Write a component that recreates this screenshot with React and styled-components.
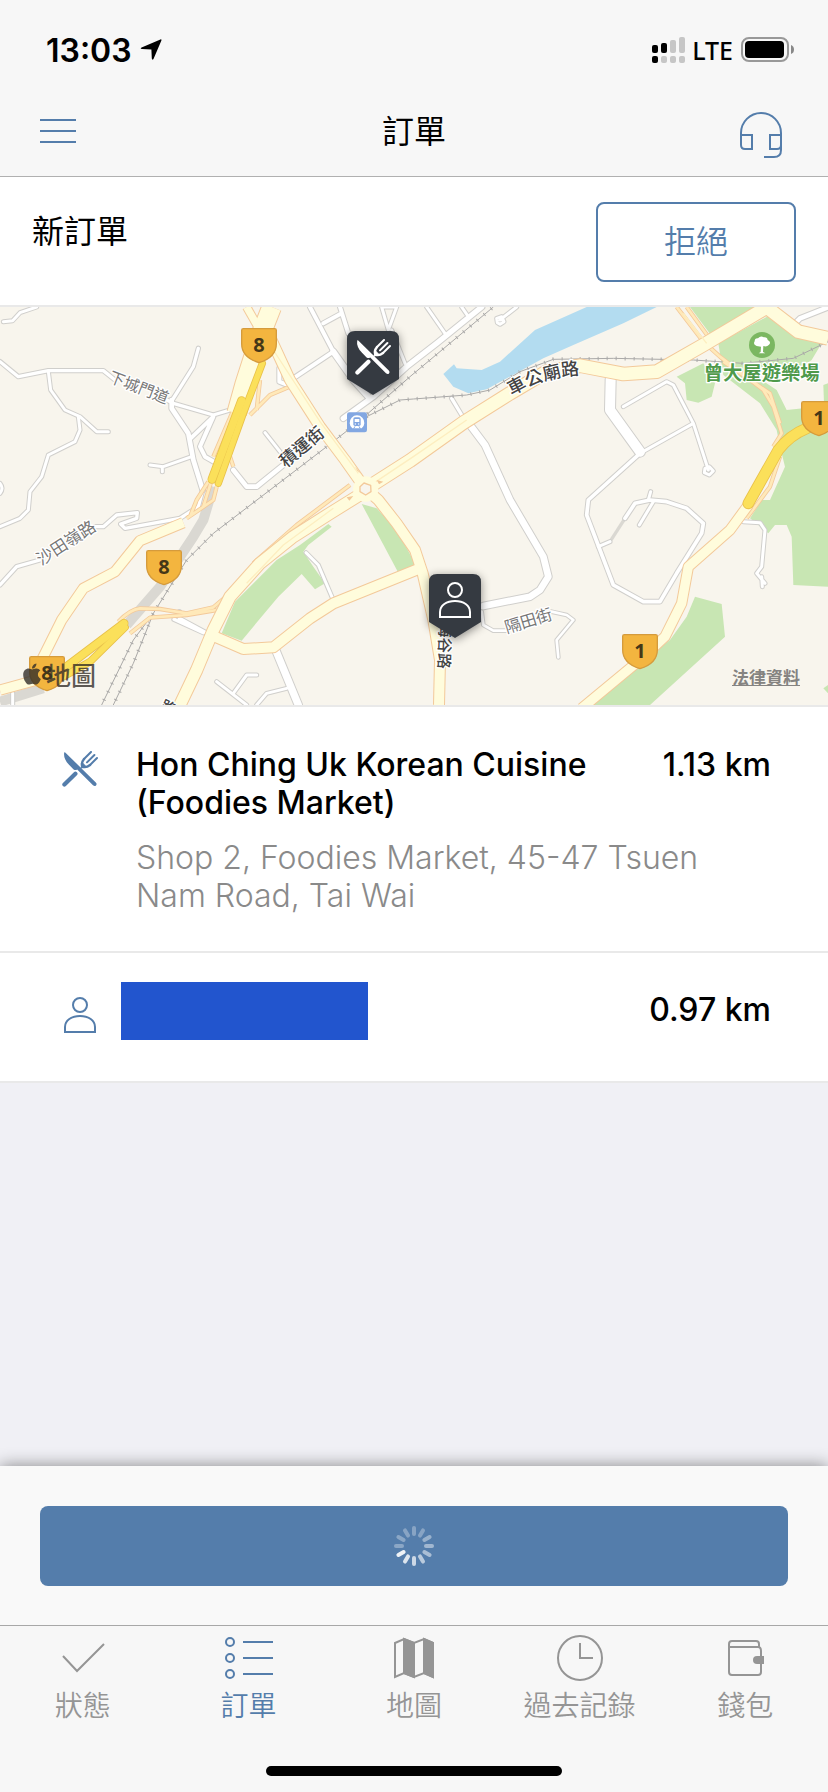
import React from 'react';
import styled, { createGlobalStyle } from 'styled-components';
import { FaApple } from 'react-icons/fa';

const blue = '#547dab';
const grey = '#959595';

// MAP DATA ------------------------

const greens = [
    '665,1000 705,905 830,780 900,735 985,672 995,680 925,735 910,755 940,800 975,850 945,868 905,822 835,890 725,1022',
    '1085,612 1130,625 1190,690 1248,795 1195,818',
    '2070,21 2262,21 2135,108',
    '2155,130 2310,45 2395,105 2465,130 2435,180 2405,200 2280,215 2270,230 2330,270 2360,330 2410,325 2484,400 2484,860 2380,855 2375,710 2360,675 2325,675 2305,700 2250,655 2285,600 2310,600 2355,500 2340,440 2330,390 2280,310 2170,225',
    '2030,230 2110,190 2145,250 2135,290 2095,308 2060,300 2055,250',
    '1770,1215 1960,1060 2010,1020 2060,950 2085,890 2165,912 2175,1010 1950,1215',
    '2470,255 2484,250 2484,310 2472,310',
    '2470,1165 2484,1155 2484,1180',
];

const streets = [
    { w: 10, d: 'M0 185L55 230L145 212H310L345 240M500 300L520 310L640 345L690 330L710 310' },
    { w: 9, d: 'M145 215L152 270L195 330L240 350L290 395H325' },
    { w: 9, d: 'M235 350L240 390L225 425L145 465L125 530L90 575L85 630L60 655L0 680' },
    { w: 10, d: 'M0 855L50 800L120 780M285 680H310L350 645L412 638L410 655L362 672L375 685L540 655L595 620L608 570' },
    { w: 14, d: 'M608 570L580 480L565 400L515 325V300' },
    { w: 10, d: 'M517 300L580 200L595 145' },
    { w: 12, d: 'M640 350L572 415M640 350L600 440L615 470L650 490' },
    { w: 14, d: 'M700 510L740 560H770L850 495L880 470' },
    { w: 9, d: 'M840 455L795 398M450 495L490 500L575 470M487 500V515' },
    { w: 12, d: 'M838 205V245L862 255M880 235L1000 155L930 21M970 70L1025 40M1020 21L1045 100' },
    { w: 18, d: 'M1000 155L1060 240L1105 290' },
    { w: 9, d: 'M1145 21L1165 90L1190 21H1150M1175 90L1215 190' },
    { w: 16, d: 'M1030 355L1120 290L1220 200L1310 130L1445 21' },
    { w: 9, d: 'M1280 21L1335 100M1385 21L1405 50M1500 60L1550 21M1490 55L1505 50L1512 65L1500 73L1492 68Z' },
    { w: 10, d: 'M1355 295L1385 345' },
    { w: 20, d: 'M1410 375L1455 435L1530 600L1630 770L1645 830L1620 870L1590 890L1450 918' },
    { w: 8, d: 'M1445 935L1450 975L1480 992H1520M1655 935L1700 945L1720 960L1670 1020L1675 1072' },
    { w: 30, d: 'M1832 238L1830 330L1920 455' },
    { w: 11, d: 'M1920 460L1765 600L1760 645L1840 855L1930 905H1980L2030 820L2105 700L2110 670L2060 625L2000 605L1950 600L1905 610L1875 655' },
    { w: 9, d: 'M1960 605L1918 675M1952 575L1945 600M1795 740L1830 725' },
    { w: 9, d: 'M1870 320L2000 245L2020 255L2080 370L2125 510M2080 370L1920 460M2115 505L2128 500L2140 513L2128 525L2113 518Z' },
    { w: 9, d: 'M2230 665L2280 668L2295 690L2285 800L2270 820L2295 850M2285 830L2287 860' },
    { w: 14, d: 'M2385 70L2400 55L2484 22' },
    { w: 22, d: 'M825 1045L895 1215' },
    { w: 9, d: 'M650 1145L740 1215M700 1180L740 1125H770M770 1215L800 1180L860 1165' },
    { w: 9, d: 'M918 758L955 795L1002 905' },
    { w: 10, d: 'M538 935V955L640 1010M522 958L610 998' },
    { w: 9, d: 'M0 550Q12 565 0 580M38 1180V1215M10 65L38 62L60 38L110 21' },
];

const avenues = [
    { w: 56, d: 'M815 21L780 110L735 250L710 340' },
    { w: 22, d: 'M740 21L785 100' },
    { w: 30, d: 'M810 110L870 240L960 380L1035 480L1095 565L1135 600L1190 670L1245 750L1268 820L1300 960L1320 1080L1317 1215' },
    { w: 38, d: 'M1095 568L1230 482L1390 368L1530 280L1640 215L1740 197L1870 222L1970 215L2110 135L2300 22L2395 95L2484 115' },
    { w: 34, d: 'M1095 575L990 640L880 710L780 790L690 890L640 990L590 1110L535 1225' },
    { w: 30, d: 'M1260 805L1000 910L930 955L820 1042L730 1047L640 1008' },
    { w: 28, d: 'M550 668L420 722L345 815L250 865L185 960L110 1110M0 1170L110 1140' },
    { w: 28, d: 'M2245 615L2190 690L2065 800L2045 910L1995 1010L1920 1080L1745 1225' },
];

const ramps = [
    'M2030 21L2110 125L2160 170L2290 270L2320 320L2345 400L2320 440M2060 21L2125 110',
    'M2170 185L2310 280L2340 370M2340 470L2310 560L2240 655',
    'M865 262L810 285L750 345M640 470L700 330M700 500L690 470M770 330L780 240',
    'M355 965Q390 928 420 925L480 927L560 940L640 922L690 880M390 1000L450 953L560 945L650 930',
    'M625 545L590 600L570 650M650 560L640 600L560 655M632 550L610 620',
    'M1050 555L890 675L760 790',
];

const highways = [
    { w: 17, d: 'M787 190L730 340L655 550' },
    { w: 22, d: 'M725 302L636 538' },
    { w: 22, d: 'M372 970L200 1100' },
    { w: 18, d: 'M375 982L270 1085L190 1130' },
    { w: 30, d: 'M2420 385Q2370 405 2335 450L2290 530L2245 610' },
];

const rails = [
    'M300 1225L400 1020L460 940L560 780L640 700L980 440L1070 370L1230 230L1480 21',
    'M335 1225L400 1090L460 940M1100 350L1200 300L1240 297L1400 285L1470 270L1560 215L1660 178L1840 175L2080 180L2230 190L2380 175L2484 125',
];

const shields = [
    { x: 777, y: 86, n: 8 },
    { x: 492, y: 752, n: 8 },
    { x: 141, y: 1070, n: 8 },
    { x: 2457, y: 305, n: 1 },
    { x: 1920, y: 1004, n: 1 },
];

const labels = [
    { x: 417, y: 262, size: 47, turn: 21, text: '下城門道' },
    { x: 905, y: 440, size: 52, turn: -40, text: '積運街', strong: true },
    { x: 198, y: 728, size: 50, turn: -33, text: '沙田嶺路' },
    { x: 1585, y: 962, size: 49, turn: -17, text: '隔田街' },
    { x: 1334, y: 1036, size: 47, turn: 92, text: '梅谷路', strong: true },
    { x: 505, y: 1222, size: 44, turn: 25, text: '路', strong: true },
];

// ICONS ------------------------

const UtensilsIcon = () => (
    <svg width="36" height="36" viewBox="0 0 36 36" fill="none" stroke="currentColor" strokeLinecap="round" aria-hidden="true">
        <path d="M2.2 1.4Q1.2 7.5 6.8 13.6L11.6 18.6Q13.5 19.6 15.2 18.6L31 34.2Q32.6 35.6 34 34.4Q35.3 33 33.8 31.4L4 2.2Q2.8 .8 2.2 1.4Z" fill="currentColor" stroke="none" />
        <path d="M2.4 33.6L13.4 22.8" strokeWidth="4.2" />
        <path d="M29 1L22 8M32.4 4L25 11.4M35 7L28 14" strokeWidth="2" />
        <path d="M22 8Q18.8 12 20.4 15.6Q24 17.2 28 14" strokeWidth="2.4" />
        <path d="M20.6 12L24 15.6L19.4 17Z" fill="currentColor" strokeWidth="1" />
    </svg>
);

const PersonIcon = () => (
    <svg width="36" height="36" viewBox="0 0 36 36" fill="none" stroke="currentColor" strokeWidth="2" aria-hidden="true">
        <circle cx="18" cy="8" r="7" />
        <path d="M3 35V30C3 23.500 9.500 19 18 19S33 23.500 33 30V35Z" />
    </svg>
);

const HeadsetIcon = () => (
    <svg width="42" height="46" viewBox="0 0 42 46" fill="none" stroke="currentColor" strokeWidth="2" aria-hidden="true">
        <path d="M1 23V21A20 20 0 0 1 41 21V38Q41 45 34 45H24" />
        <path d="M1 23H12V37H5Q1 37 1 33ZM41 23H30V37H37Q41 37 41 33Z" />
    </svg>
);

const tabIcons = {
    check: <path d="M4 22L18 37L45 10" />,
    list: (
        <>
            <circle cx="6" cy="8" r="4" /><circle cx="6" cy="24" r="4" /><circle cx="6" cy="40" r="4" />
            <path d="M19 8H49M19 24H49M19 40H49" />
        </>
    ),
    map: (
        <>
            <path d="M5 9L14 5L24 9L34 5L43 9V43L34 39L24 43L14 39L5 43Z" />
            <path d="M14 5L24 9V43L14 39ZM34 5L43 9V43L34 39Z" fill="currentColor" />
        </>
    ),
    clock: (
        <>
            <circle cx="24" cy="24" r="22" />
            <path d="M24 9V24H37" />
        </>
    ),
    wallet: (
        <>
            <path d="M8 14V10Q8 7 11 7H35Q38 7 38 10V14" />
            <path d="M8 13H37Q40 13 40 17V38Q40 41 37 41H11Q8 41 8 38Z" />
            <path d="M43 22V30H36Q32 30 32 26Q32 22 36 22Z" fill="currentColor" stroke="none" />
        </>
    ),
};

const spokes = [30, 30, 40, 45, 50, 60, 70, 80, 90, 32, 32, 30];

const Spinner = () => (
    <svg width="40" height="40" viewBox="-20 -20 40 40" stroke="#fff" strokeWidth="4" strokeLinecap="round" aria-hidden="true">
        {spokes.map((o, i) => (
            <line key={i} y1="-12" y2="-18" opacity={o / 100} transform={`rotate(${i * 30})`} />
        ))}
    </svg>
);

const StatusIcons = () => (
    <svg width="34" height="28" viewBox="0 0 34 28" aria-hidden="true">
        <g fill="#000">
            <rect y="9" width="6" height="8" rx="2" /><rect x="9" y="7" width="6" height="10" rx="2" />
            <rect y="20" width="6" height="7" rx="2" />
        </g>
        <g fill="#c6c6c6">
            <rect x="18" y="4" width="6" height="13" rx="2" /><rect x="27" y="1" width="6" height="16" rx="2" />
            <rect x="9" y="20" width="6" height="7" rx="2" /><rect x="18" y="20" width="6" height="7" rx="2" />
            <rect x="27" y="20" width="6" height="7" rx="2" />
        </g>
    </svg>
);

const Battery = () => (
    <svg width="54" height="26" viewBox="0 0 54 26" aria-hidden="true">
        <rect x="1" y="1" width="46" height="23" rx="7" fill="none" stroke="#999" strokeWidth="2" />
        <rect x="4" y="4" width="39" height="17" rx="4" />
        <path d="M50 8Q53 9 53 12.500T50 17Z" fill="#888" />
    </svg>
);

// MAP ------------------------

const MapDrawing = () => (
    <MapSvg viewBox="0 21 2484 1194" role="img" aria-label="地圖">
        <rect y="21" width="2484" height="1194" fill="#f8f5ed" />
        {greens.map(p => <polygon key={p} points={p} fill="#c8e6b3" />)}
        <path fill="#b3dcf0" d="M1760 21L1605 90L1500 185L1445 210L1370 205L1362 193L1330 222L1360 260L1405 280L1460 268L1630 175L1720 135L1870 70L1970 21Z" />

        <g fill="none" strokeLinejoin="round">
            <path d="M640 560L610 660L580 710L480 860L380 975M0 1205L130 1165" stroke="#dad8d2" strokeWidth="30" />
            <path d="M1830 725L1875 655" stroke="#dad8d2" strokeWidth="10" />
            <g strokeLinecap="round">
                {streets.map(r => <path key={r.d} d={r.d} stroke="#d0cfcc" strokeWidth={r.w + 6} />)}
                {streets.map(r => <path key={r.d} d={r.d} stroke="#fff" strokeWidth={r.w} />)}
            </g>
            {rails.map(d => (
                <g key={d} stroke="#aaa9a8">
                    <path d={d} strokeWidth="3" />
                    <path d={d} strokeWidth="11" strokeDasharray="3 24" />
                </g>
            ))}
            {ramps.map(d => <path key={d} d={d} stroke="#f3c99a" strokeWidth="13" />)}
            {ramps.map(d => <path key={d} d={d} stroke="#ffe9b9" strokeWidth="8" />)}
            {avenues.map(r => <path key={r.d} d={r.d} stroke="#f3c99a" strokeWidth={r.w + 6} />)}
            {avenues.map(r => <path key={r.d} d={r.d} stroke="#fffcdc" strokeWidth={r.w} />)}
            <path d="M1120 550L1240 470L1400 360M820 150L960 365L1075 520M1000 625L850 735L740 850M2050 40L2120 130" stroke="#fdeec0" strokeWidth="4" />
            <circle cx="1097" cy="567" r="38" fill="#fffcdc" />
            <path d="M1080 560L1092 549L1112 556L1113 575L1097 585L1080 575Z" fill="#f8f5ed" stroke="#f3c99a" strokeWidth="4" />
            <path d="M1130 540L1150 545L1137 553ZM1040 592L1060 588L1048 602ZM1065 500L1085 522L1072 512Z" fill="#f3c99a" />
            <g strokeLinecap="round">
                {highways.map(r => <path key={r.d} d={r.d} stroke="#e9c14a" strokeWidth={r.w + 5} />)}
                {highways.map(r => <path key={r.d} d={r.d} stroke="#fbe05a" strokeWidth={r.w} />)}
            </g>
        </g>

        {shields.map(s => (
            <g key={`${s.x}-${s.y}`} transform={`translate(${s.x} ${s.y})`}>
                <path d="M-47 0H47Q52 0 52 5V45C52 72 38 90 0 102C-38 90 -52 72 -52 45V5Q-52 0 -47 0Z" fill="#f3b53f" stroke="#d59b3c" strokeWidth="4" />
                <ShieldText y="70">{s.n}</ShieldText>
            </g>
        ))}

        {labels.map(l => (
            <RoadLabel
                key={`${l.text}-${l.x}`}
                $strong={l.strong}
                fontSize={l.size}
                transform={`translate(${l.x} ${l.y}) rotate(${l.turn})`}
                y={l.size * 0.36}
            >
                {l.text}
            </RoadLabel>
        ))}
        <path id="temple-road" d="M1530 290Q1625 230 1745 224" fill="none" />
        <RoadLabel $strong fontSize="54">
            <textPath href="#temple-road" startOffset="50%">車公廟路</textPath>
        </RoadLabel>

        <circle cx="2286" cy="135" r="39" fill="#7bb761" />
        <path d="M2283 140L2270 138Q2258 134 2264 124Q2264 114 2274 115Q2282 106 2291 112Q2302 110 2303 120Q2315 126 2307 134Q2300 142 2290 138L2289 156L2296 160H2276L2282 156Z" fill="#fff" />
        <ParkLabel x="2285" y="239">曾大屋遊樂場</ParkLabel>

        <g transform="translate(1041 337)">
            <rect width="60" height="60" rx="7" fill="#82a7e2" />
            <path d="M16 48A22 22 0 1 1 44 48Z" fill="#fff" />
            <rect x="19" y="15" width="22" height="26" rx="5" fill="#82a7e2" />
            <rect x="23" y="20" width="14" height="9" fill="#fff" />
            <circle cx="25" cy="35" r="2" fill="#fff" /><circle cx="35" cy="35" r="2" fill="#fff" />
            <path d="M24 42L20 49M36 42L40 49" stroke="#82a7e2" strokeWidth="3" />
        </g>
    </MapSvg>
);

const Pin = ({ left, top, label, children }) => (
    <PinBox $left={left} $top={top} role="img" aria-label={label}>
        <PinShape width="52" height="64" viewBox="0 0 52 64" aria-hidden="true">
            <path d="M8 0H44Q52 0 52 8V48L26 64L0 48V8Q0 0 8 0Z" fill="#353a41" />
        </PinShape>
        <PinIcon>{children}</PinIcon>
    </PinBox>
);

const tabs = [
    { icon: 'check', name: '狀態' },
    { icon: 'list', name: '訂單', active: true },
    { icon: 'map', name: '地圖' },
    { icon: 'clock', name: '過去記錄' },
    { icon: 'wallet', name: '錢包' },
];

const App = () => {
    return (
        <Page>
            <GlobalStyle />
            <StatusBar>
                <Time>13:03</Time>
                <svg width="22" height="22" viewBox="0 0 22 22" aria-hidden="true">
                    <path d="M20.400.4Q21.800 0 21.400 1.400L13.600 19.800Q12.400 21.600 11.800 19.600L11.400 10.400L2 10Q-.4 9.400 1.600 8.400Z" />
                </svg>
                <Spacer />
                <StatusIcons />
                <Network>LTE</Network>
                <Battery />
            </StatusBar>
            <NavBar>
                <IconButton aria-label="選單">
                    <svg width="36" height="24" viewBox="0 0 36 24" stroke="currentColor" strokeWidth="2" aria-hidden="true">
                        <path d="M0 1H36M0 12H36M0 23H36" />
                    </svg>
                </IconButton>
                <NavTitle>訂單</NavTitle>
                <SupportButton aria-label="客戶服務"><HeadsetIcon /></SupportButton>
            </NavBar>

            <Main>
                <OrderHeader>
                    <OrderTitle>新訂單</OrderTitle>
                    <RejectButton>拒絕</RejectButton>
                </OrderHeader>

                <MapBox>
                    <MapDrawing />
                    <MapBrand><FaApple size={24} aria-hidden="true" />地圖</MapBrand>
                    <Legal href="#legal">法律資料</Legal>
                    <Pin left={45} top={6} label="餐廳"><UtensilsIcon /></Pin>
                    <Pin left={55} top={67} label="顧客"><PersonIcon /></Pin>
                </MapBox>

                <Stop>
                    <StopIcon><UtensilsIcon /></StopIcon>
                    <StopBody>
                        <StopLine>
                            <StopName>Hon Ching Uk Korean Cuisine (Foodies Market)</StopName>
                            <Distance>1.13 km</Distance>
                        </StopLine>
                        <Address>Shop 2, Foodies Market, 45-47 Tsuen Nam Road, Tai Wai</Address>
                    </StopBody>
                </Stop>
                <Stop>
                    <StopIcon><PersonIcon /></StopIcon>
                    <Redacted />
                    <CustomerDistance>0.97 km</CustomerDistance>
                </Stop>
            </Main>

            <ActionBar>
                <AcceptButton aria-label="接受" aria-busy="true"><Spinner /></AcceptButton>
            </ActionBar>
            <TabBar>
                {tabs.map(t => (
                    <Tab key={t.name} href={`#${t.icon}`} $active={t.active}>
                        <TabIcon viewBox="0 0 48 48" aria-hidden="true">{tabIcons[t.icon]}</TabIcon>
                        {t.name}
                    </Tab>
                ))}
            </TabBar>
            <HomeArea><HomeIndicator /></HomeArea>
        </Page>
    );
};

export default App;


// STYLES ------------------------

const GlobalStyle = createGlobalStyle`
    * {
        box-sizing: border-box;
    }

    body {
        margin: 0;
        font-family: Inter, "Noto Sans CJK TC", sans-serif;
        color: #000;
    }

    button {
        font-family: inherit;
        background: none;
        border: 0;
        padding: 0;
        cursor: pointer;
    }
`

const Page = styled.div`
    display: flex;
    flex-direction: column;
    min-height: 100vh;
    background: #f0f0f5;
`

const StatusBar = styled.div`
    display: flex;
    align-items: center;
    height: 88px;
    padding: 12px 33px 0 46px;
    background: #f7f7f7;
`

const Time = styled.span`
    margin-right: 8px;
    font-size: 32px;
    font-weight: 600;
`

const Spacer = styled.div`
    flex: 1;
`

const Network = styled.span`
    margin: 0 8px 0 6px;
    font-family: "Noto Sans", sans-serif;
    font-size: 25px;
    font-weight: 500;
`

const NavBar = styled.header`
    display: grid;
    grid-template-columns: 1fr auto 1fr;
    align-items: center;
    height: 89px;
    padding: 0 46px 0 40px;
    background: #f7f7f7;
    border-bottom: 1px solid #b0b0b0;
`

const IconButton = styled.button`
    justify-self: start;
    display: flex;
    padding-bottom: 2px;
    color: ${blue};
`

const SupportButton = styled(IconButton)`
    justify-self: end;
    padding: 6px 0 0;
`

const NavTitle = styled.h1`
    margin: 0 0 0 6px;
    font-size: 32px;
    line-height: 48px;
    font-weight: 400;
`

const Main = styled.main`
    flex: 1;
`

const OrderHeader = styled.section`
    display: flex;
    align-items: flex-start;
    justify-content: space-between;
    padding: 25px 32px 23px;
    background: #fff;
    border-bottom: 2px solid #e9e9e9;
`

const OrderTitle = styled.h2`
    margin: 6px 0 0;
    font-size: 32px;
    line-height: 48px;
    font-weight: 400;
`

const RejectButton = styled.button`
    width: 200px;
    height: 80px;
    padding-bottom: 6px;
    border: 2px solid ${blue};
    border-radius: 8px;
    color: ${blue};
    font-size: 32px;
    font-weight: 350;
`

const MapBox = styled.section`
    position: relative;
    overflow: hidden;
    border-bottom: 2px solid #e9e9e9;
`

const MapSvg = styled.svg`
    display: block;
    width: 100%;
`

const RoadLabel = styled.text`
    font-family: "Noto Sans CJK TC", sans-serif;
    font-weight: ${props => props.$strong ? 500 : 400};
    fill: ${props => props.$strong ? '#444' : '#777'};
    stroke: #fff;
    stroke-width: 8px;
    stroke-linejoin: round;
    paint-order: stroke;
    text-anchor: middle;
`

const ParkLabel = styled(RoadLabel)`
    font-size: 58px;
    font-weight: 700;
    fill: #4f9a4b;
`

const ShieldText = styled.text`
    font-family: "Noto Sans", sans-serif;
    font-size: 60px;
    font-weight: 700;
    fill: #453717;
    text-anchor: middle;
`

const MapBrand = styled.div`
    position: absolute;
    left: 20px;
    bottom: 13px;
    display: flex;
    align-items: center;
    gap: 2px;
    font-size: 25px;
    font-weight: 500;
    color: rgba(50, 45, 40, 0.8);
`

const Legal = styled.a`
    position: absolute;
    right: 28px;
    bottom: 16px;
    color: #858381;
    font-size: 17px;
    font-weight: 700;
`

const PinBox = styled.div`
    position: absolute;
    left: ${props => props.$left}%;
    top: ${props => props.$top}%;
    width: 52px;
    height: 64px;
    margin-left: -26px;
    color: #fff;
`

const PinShape = styled.svg`
    display: block;
    overflow: visible;
    filter: drop-shadow(0 2px 5px rgba(0, 0, 0, 0.45));
`

const PinIcon = styled.div`
    position: absolute;
    left: 8px;
    top: 8px;
`

const Stop = styled.section`
    display: flex;
    padding: 0 57px 0 62px;
    background: #fff;
    border-bottom: 2px solid #e9e9e9;
`

const StopIcon = styled.div`
    padding-top: 44px;
    color: ${blue};
`

const StopBody = styled.div`
    flex: 1;
    padding: 39px 0 36px 38px;
`

const StopLine = styled.div`
    display: flex;
    justify-content: space-between;
    gap: 24px;
    font-size: 32px;
    line-height: 38px;
    font-weight: 500;
`

const StopName = styled.h3`
    margin: 0;
    font-size: inherit;
    font-weight: inherit;
`

const Distance = styled.span`
    white-space: nowrap;
`

const CustomerDistance = styled(Distance)`
    margin-left: auto;
    padding-top: 38px;
    font-size: 32px;
    line-height: 38px;
    font-weight: 500;
`

const Address = styled.p`
    margin: 17px 0 0;
    padding-right: 24px;
    color: #8a8a8a;
    font-size: 32px;
    line-height: 38px;
    font-weight: 300;
`

const Redacted = styled.div`
    width: 247px;
    height: 58px;
    margin: 29px 0 41px 23px;
    background: #2255ce;
`

const ActionBar = styled.div`
    padding: 40px 40px 39px;
    background: #f9f9f9;
    box-shadow: 0 0 16px rgba(0, 0, 0, 0.45);
`

const AcceptButton = styled.button`
    display: flex;
    align-items: center;
    justify-content: center;
    width: 100%;
    height: 80px;
    border-radius: 8px;
    background: ${blue};
`

const TabBar = styled.nav`
    display: grid;
    grid-template-columns: repeat(5, 1fr);
    background: #f7f7f7;
    border-top: 1px solid #a8a8a8;
    z-index: 1;
`

const Tab = styled.a`
    display: flex;
    flex-direction: column;
    align-items: center;
    gap: 8px;
    padding: 8px 0;
    color: ${props => props.$active ? blue : grey};
    font-size: 28px;
    line-height: 32px;
    font-weight: 350;
    text-decoration: none;
`

const TabIcon = styled.svg`
    width: 48px;
    height: 48px;
    overflow: visible;
    fill: none;
    stroke: currentColor;
    stroke-width: 2px;
`

const HomeArea = styled.footer`
    display: flex;
    justify-content: center;
    padding: 36px 0 16px;
    background: #f7f7f7;
    z-index: 1;
`

const HomeIndicator = styled.div`
    width: 296px;
    height: 10px;
    border-radius: 5px;
    background: #000;
`
